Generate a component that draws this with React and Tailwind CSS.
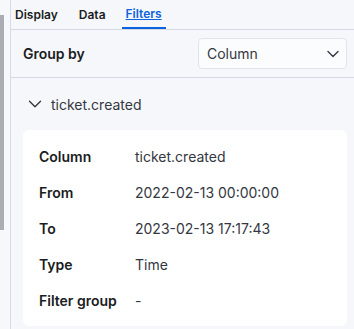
import { ChevronDown } from 'lucide-react';

const rows = [
  ['Column', 'ticket.created'],
  ['From', '2022-02-13 00:00:00'],
  ['To', '2023-02-13 17:17:43'],
  ['Type', 'Time'],
  ['Filter group', '-'],
];

const App = () => {
  return (
    <div
      className="flex h-[329px] w-[354px] overflow-hidden bg-[#f6f7fa] text-[#1a1c21]"
      style={{ fontFamily: 'Inter, "Noto Sans", sans-serif' }}
    >
      <div className="w-[11px] shrink-0 border-r border-[#d9d9ec] bg-[#f7f8fc]">
        <div className="mt-[15px] h-[215px] w-[4px] bg-[#abadb5]" />
      </div>

      <div className="flex flex-1 flex-col">
        <div className="flex h-[30px] items-stretch border-b border-[#d3dae6] text-[12px] font-semibold">
          <div className="flex items-center px-1">Display</div>
          <div className="ml-[13px] flex items-center px-1">Data</div>
          <div className="ml-[12px] flex items-center border-b-2 border-[#0b64dd] px-1 text-[#0b64dd] underline">
            Filters
          </div>
        </div>

        <div className="flex h-[48px] items-center justify-between border-b border-[#d3dae6] pl-3 pr-[7px]">
          <span className="text-[14px] font-semibold">Group by</span>
          <div className="flex h-[31px] w-[149px] items-center justify-between rounded-[4px] border border-[#e0e4ed] bg-[#fbfcfd] pl-2 pr-[3px] text-[14px] text-[#343741]">
            Column
            <ChevronDown size={20} strokeWidth={1.6} className="text-[#343741]" />
          </div>
        </div>

        <div className="flex h-[52px] items-center pl-[13px] text-[14px] text-[#343741]">
          <ChevronDown size={22} strokeWidth={1.5} className="mr-[5px]" />
          ticket.created
        </div>

        <div className="ml-3 mr-[7px] rounded-[6px] bg-white py-2 pl-4 text-[14px]">
          {rows.map(([label, value]) => (
            <div key={label} className="flex h-9 items-center">
              <span className="w-[96px] font-semibold">{label}</span>
              <span className="text-[#343741]">{value}</span>
            </div>
          ))}
        </div>
      </div>
    </div>
  );
};

export default App;
